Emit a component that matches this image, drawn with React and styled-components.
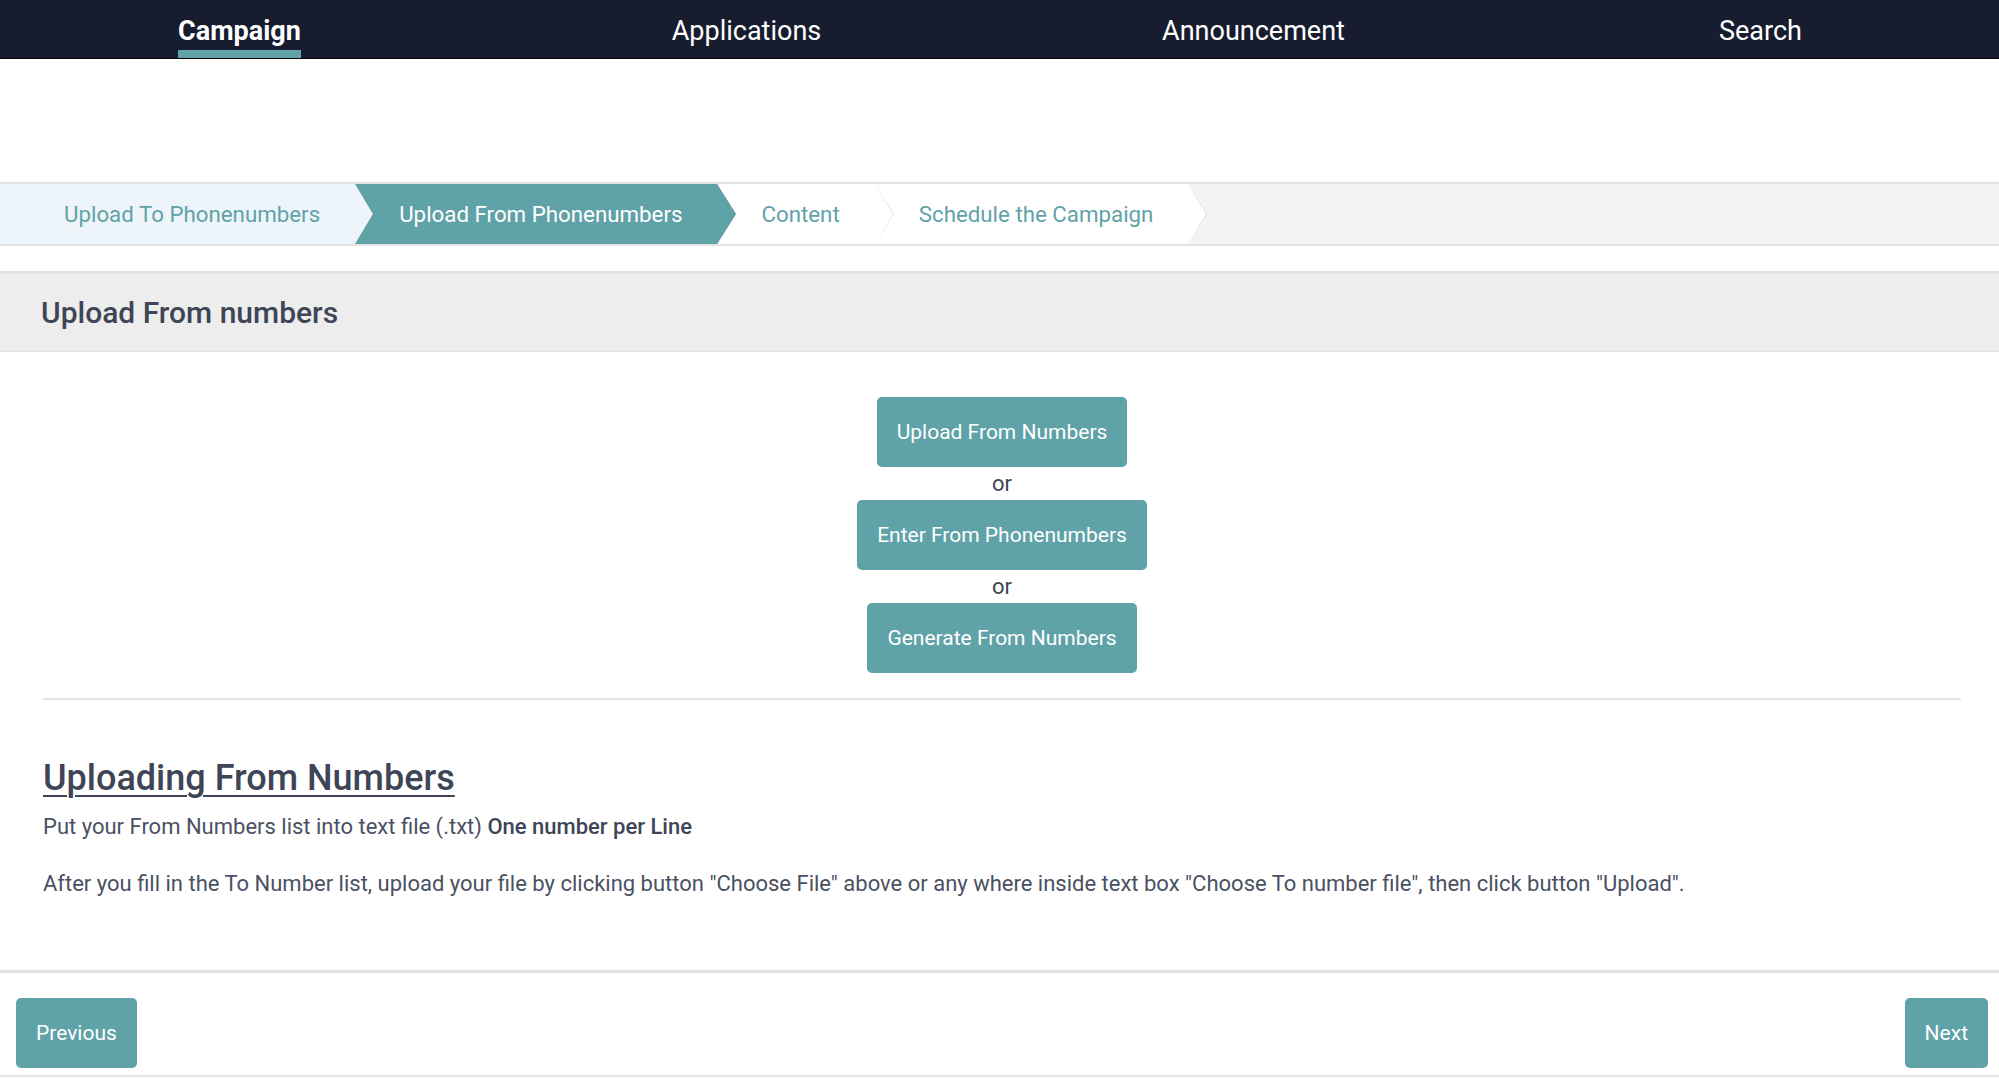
import styled, { createGlobalStyle } from "styled-components";

const GlobalStyle = createGlobalStyle`
  body {
    margin: 0;
    font-family: Roboto, "Liberation Sans", sans-serif;
    background: #ffffff;
    color: #3e4556;
  }
  * { box-sizing: border-box; }
`;

const TEAL = "#5fa2a8";
const INK = "#3e4556";

// top navigation
const NavBar = styled.nav`
  height: 59px;
  background: #171c2f;
  border-bottom: 1px solid #05070d;
  overflow: hidden;
`;

const NavList = styled.ul`
  list-style: none;
  margin: 0 0 0 -14px;
  padding: 0;
  display: flex;
  height: 100%;
`;

const NavItem = styled.li`
  flex: 0 0 507px;
  display: flex;
  justify-content: center;
  height: 100%;
`;

const NavLink = styled.a`
  display: flex;
  align-items: center;
  height: 100%;
  color: #ffffff;
  font-size: 27px;
  font-weight: ${(p) => (p.$active ? 700 : 400)};
  text-decoration: none;
  border-bottom: 8px solid ${(p) => (p.$active ? TEAL : "transparent")};
  padding-top: 11px;
`;

// wizard steps
const StepBar = styled.ol`
  list-style: none;
  margin: 123px 0 0;
  padding: 0;
  display: flex;
  height: 64px;
  background: #f3f3f3;
  border-top: 2px solid #e3e3e3;
  border-bottom: 2px solid #e3e3e3;
`;

const Step = styled.li`
  position: relative;
  display: flex;
  align-items: center;
  padding: 0 35px 0 ${(p) => (p.$first ? 64 : 44)}px;
  background: ${(p) => p.$bg};
  color: ${(p) => p.$color};
  font-size: 22.3px;
  white-space: nowrap;

  &::before,
  &::after {
    content: "";
    position: absolute;
    top: 0;
    border-top: 30px solid transparent;
    border-bottom: 30px solid transparent;
  }

  &::before {
    right: -19px;
    border-left: 19px solid ${(p) => p.$edge};
    z-index: 2;
  }

  &::after {
    right: -18px;
    border-left: 18px solid ${(p) => p.$bg};
    z-index: 3;
  }
`;

// section panel
const PanelHeader = styled.div`
  margin-top: 25px;
  height: 81px;
  display: flex;
  align-items: center;
  padding-left: 41px;
  background: #ededed;
  border-top: 3px solid #e2e2e2;
  border-bottom: 1px solid #e2e2e2;
`;

const PanelTitle = styled.h2`
  margin: 0;
  font-size: 30px;
  font-weight: 500;
  color: ${INK};
`;

const PanelBody = styled.div`
  padding: 45px 38px 0 43px;
`;

const Choices = styled.div`
  display: flex;
  flex-direction: column;
  align-items: center;
`;

const TealButton = styled.button`
  background: ${TEAL};
  color: #ffffff;
  border: none;
  border-radius: 5px;
  font-family: Roboto, "Liberation Sans", sans-serif;
  font-size: 21px;
  font-weight: 400;
  height: 70px;
  padding: 0 20px;
  cursor: pointer;
`;

const Or = styled.span`
  font-size: 22px;
  line-height: 33px;
  color: ${INK};
`;

const Divider = styled.hr`
  margin: 25px 0 0;
  border: none;
  border-top: 2px solid #e6e6e6;
`;

const HelpTitle = styled.h3`
  margin: 57px 0 0;
  font-size: 36px;
  line-height: 43px;
  font-weight: 500;
  color: ${INK};
  text-decoration: underline;
  text-decoration-thickness: 2px;
  text-underline-offset: 5px;
`;

const HelpText = styled.p`
  margin: ${(p) => (p.$first ? "11px" : "26px")} 0 0;
  font-size: 22px;
  line-height: 31px;
  color: #4a5163;

  strong {
    font-weight: 500;
    color: ${INK};
  }
`;

const Footer = styled.div`
  margin-top: 71px;
  display: flex;
  justify-content: space-between;
  padding: 25px 11px 7px 16px;
  border-top: 3px solid #e2e2e2;
  border-bottom: 2px solid #e6e6e6;
`;

const steps = [
  { label: "Upload To Phonenumbers", bg: "#edf5fb", color: TEAL, edge: "#6d8f94" },
  { label: "Upload From Phonenumbers", bg: TEAL, color: "#ffffff", edge: "#4e8a90" },
  { label: "Content", bg: "#ffffff", color: TEAL, edge: "#dedede" },
  { label: "Schedule the Campaign", bg: "#ffffff", color: TEAL, edge: "#dedede" },
];

function App() {
  return (
    <>
      <GlobalStyle />
      <NavBar>
        <NavList>
          {["Campaign", "Applications", "Announcement", "Search"].map((item, i) => (
            <NavItem key={item}>
              <NavLink href="#" $active={i === 0}>
                {item}
              </NavLink>
            </NavItem>
          ))}
        </NavList>
      </NavBar>

      <StepBar>
        {steps.map((s, i) => (
          <Step key={s.label} $first={i === 0} $bg={s.bg} $color={s.color} $edge={s.edge}>
            {s.label}
          </Step>
        ))}
      </StepBar>

      <PanelHeader>
        <PanelTitle>Upload From numbers</PanelTitle>
      </PanelHeader>

      <PanelBody>
        <Choices>
          <TealButton>Upload From Numbers</TealButton>
          <Or>or</Or>
          <TealButton>Enter From Phonenumbers</TealButton>
          <Or>or</Or>
          <TealButton>Generate From Numbers</TealButton>
        </Choices>
        <Divider />
        <HelpTitle>Uploading From Numbers</HelpTitle>
        <HelpText $first>
          Put your From Numbers list into text file (.txt) <strong>One number per Line</strong>
        </HelpText>
        <HelpText>
          After you fill in the To Number list, upload your file by clicking button "Choose File"
          above or any where inside text box "Choose To number file", then click button "Upload".
        </HelpText>
      </PanelBody>

      <Footer>
        <TealButton>Previous</TealButton>
        <TealButton>Next</TealButton>
      </Footer>
    </>
  );
}

export default App;
